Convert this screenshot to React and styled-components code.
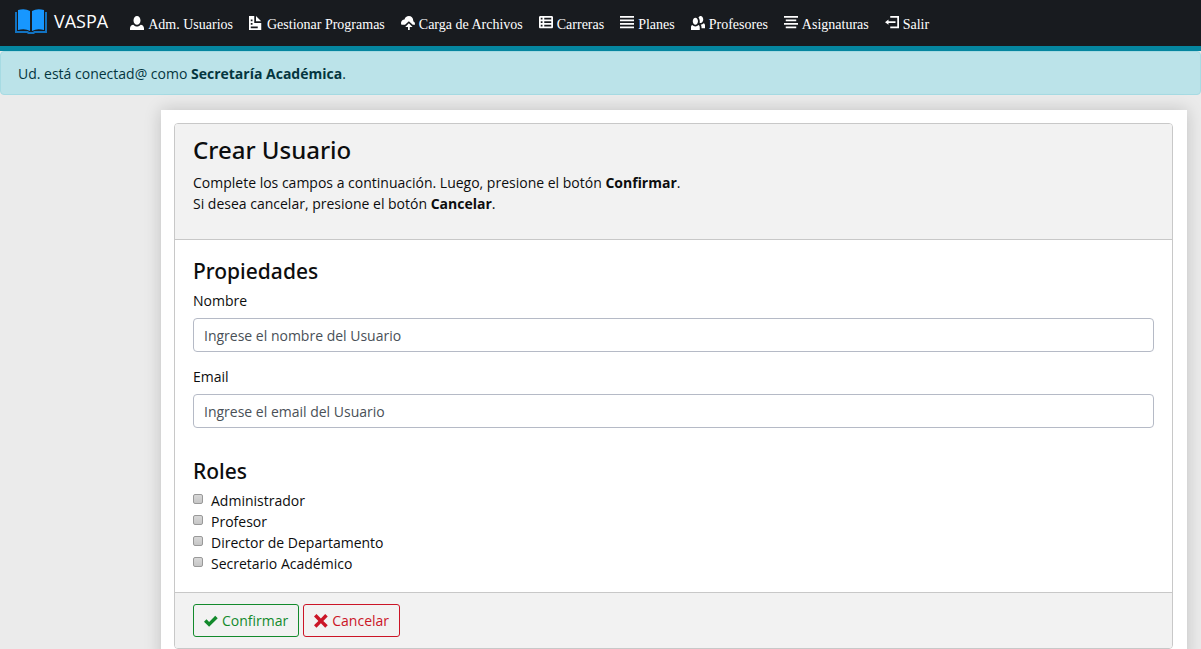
import React from "react";
import styled, { createGlobalStyle } from "styled-components";

const GlobalStyle = createGlobalStyle`
  *, *::before, *::after { box-sizing: border-box; }
  body {
    margin: 0;
    background: #ebebeb;
    color: #0c0d0e;
    font: 14px/21px "Open Sans", "Noto Sans", sans-serif;
  }
`;

const Navbar = styled.nav`
  display: flex;
  align-items: center;
  height: 51px;
  padding: 0 15px 3px;
  background: #181b1f;
  border-bottom: 5px solid #05869f;
`;

const Brand = styled.a`
  display: flex;
  align-items: center;
  gap: 7px;
  margin-right: 14px;
  color: #fff;
  font-size: 18px;
  line-height: 27px;
  text-decoration: none;
`;

const NavList = styled.ul`
  display: flex;
  margin: 0;
  padding: 6px 0 0;
  list-style: none;
`;

const NavLink = styled.a`
  display: block;
  padding: 0 8px;
  color: #fff;
  font-family: "Liberation Serif", serif;
  white-space: nowrap;
  text-decoration: none;
`;

const Glyph = styled.svg`
  width: 14px;
  height: 14px;
  margin-right: 4px;
  vertical-align: -1px;
  fill: currentColor;
`;

const Alert = styled.div`
  padding: 11px 17px 10px;
  border: 1px solid #a6dbe3;
  border-radius: 4px;
  background: #bbe3e9;
  color: #04363f;
`;

const Page = styled.main`
  margin: 15px 14px 0 161px;
  padding: 13px 14px 13px 13px;
  background: #fff;
  box-shadow: 0 0 16px rgba(0, 0, 0, 0.18);
`;

const Card = styled.form`
  border: 1px solid #c8c8c8;
  border-radius: 4px;
  overflow: hidden;
`;

const CardHeader = styled.header`
  padding: 10px 18px 25px;
  background: #f2f2f2;
  border-bottom: 1px solid #c8c8c8;
`;

const CardBody = styled.div`
  padding: 18px;
`;

const CardFooter = styled.footer`
  display: flex;
  gap: 4px;
  padding: 11px 18px;
  background: #f2f2f2;
  border-top: 1px solid #c8c8c8;
`;

const Title = styled.h1`
  margin: 0 0 6px;
  font-family: "Noto Sans", sans-serif;
  font-size: 24px;
  line-height: 32px;
  font-weight: 500;
`;

const Subtitle = styled.h2`
  margin: 0 0 6px;
  font-family: "Noto Sans", sans-serif;
  font-size: 21px;
  line-height: 26px;
  font-weight: 500;
`;

const Text = styled.p`
  margin: 0;
`;

const Field = styled.div`
  margin-bottom: 14px;
`;

const Label = styled.label`
  display: block;
  margin-bottom: 7px;
`;

const Input = styled.input`
  display: block;
  width: 100%;
  height: 34px;
  padding: 6px 10px;
  border: 1px solid #b5bac6;
  border-radius: 4px;
  background: #fff;
  color: #495057;
  font: inherit;
  &::placeholder { color: #495057; opacity: 1; }
`;

const Roles = styled.section`
  padding-top: 16px;
`;

const Option = styled.label`
  display: flex;
  gap: 8px;
`;

const Checkbox = styled.input`
  appearance: none;
  width: 10px;
  height: 10px;
  margin: 4px 0 0;
  border: 1px solid #999;
  border-radius: 2px;
  background: linear-gradient(#d8d8d8, #c6c6c6);
  &:checked { background: #05869f; }
`;

const Button = styled.button`
  display: flex;
  align-items: center;
  height: 33px;
  padding: 0 10px;
  border: 1px solid currentColor;
  border-radius: 3px;
  background: transparent;
  color: ${(p) => p.$color};
  font: inherit;
`;

const paths = {
  person: "M4 0c-1.1 0-2 1.12-2 2.5s.9 2.5 2 2.5 2-1.12 2-2.5-.9-2.5-2-2.5zm-2.09 5c-1.06.05-1.91.92-1.91 2v1h8v-1c0-1.08-.84-1.95-1.91-2-.54.61-1.28 1-2.09 1-.81 0-1.55-.39-2.09-1z",
  document: "M0 0v8h7v-4h-4v-4h-3zm4 0v3h3l-3-3zm-3 2h1v1h-1v-1zm0 2h1v1h-1v-1zm0 2h4v1h-4v-1z",
  upload: "M4.5 0c-1.21 0-2.27.86-2.5 2-1.1 0-2 .9-2 2 0 .37.11.71.28 1h2.02l2.2-2 2.2 2h1.21c.06-.16.09-.32.09-.5 0-.65-.42-1.29-1-1.5v-.5c0-1.38-1.12-2.5-2.5-2.5zm0 4.2l-2.1 2.1h1.6v1.7h1v-1.7h1.6l-2.1-2.1z",
  sheet: "M.75 0c-.4 0-.75.35-.75.75v5.5c0 .4.35.75.75.75h6.5c.4 0 .75-.35.75-.75v-5.5c0-.4-.35-.75-.75-.75h-6.5zm.25 1h1v1h-1v-1zm2 0h4v1h-4v-1zm-2 2h1v1h-1v-1zm2 0h4v1h-4v-1zm-2 2h1v1h-1v-1zm2 0h4v1h-4v-1z",
  justify: "M0 0v1h8v-1h-8zm0 2v1h8v-1h-8zm0 2v1h8v-1h-8zm0 2v1h8v-1h-8z",
  people: "M5.5 0c-.51 0-.95.35-1.22.88.45.54.72 1.28.72 2.13 0 .29-.03.55-.09.81.19.11.38.19.59.19.83 0 1.5-.9 1.5-2s-.67-2-1.5-2zm-3 1c-.83 0-1.5.9-1.5 2s.67 2 1.5 2 1.5-.9 1.5-2-.67-2-1.5-2zm4.75 3.16c-.43.51-1.02.82-1.69.84.27.38.44.84.44 1.34v.66h2v-1.66c0-.52-.31-.97-.75-1.19zm-6.5 1c-.44.22-.75.67-.75 1.19v1.66h5v-1.66c0-.52-.31-.97-.75-1.19-.45.53-1.06.84-1.75.84s-1.3-.32-1.75-.84z",
  center: "M0 0v1h8v-1h-8zm1 2v1h6v-1h-6zm-1 2v1h8v-1h-8zm1 2v1h6v-1h-6z",
  logout: "M3 0v1h4v5h-4v1h5v-7h-5zm-1 2l-2 1.5 2 1.5v-1h4v-1h-4v-1z",
  check: "M6.41 1l-.69.72-2.78 2.78-.81-.78-.72-.72-1.41 1.41.72.72 1.5 1.5.69.72.72-.72 3.5-3.5.72-.72-1.44-1.41z",
  cross: "M1.41 0l-1.41 1.41.72.72 1.78 1.81-1.78 1.78-.72.69 1.41 1.44.72-.72 1.81-1.81 1.78 1.81.69.72 1.44-1.44-.72-.69-1.81-1.78 1.81-1.81.72-.72-1.44-1.41-.69.72-1.78 1.78-1.81-1.78-.72-.72z",
};

const Icon = ({ name }) => (
  <Glyph viewBox="0 0 8 8" aria-hidden="true"><path d={paths[name]} /></Glyph>
);

const BookLogo = () => (
  <svg width="32" height="26" viewBox="0 0 32 26" aria-hidden="true">
    <path d="M0 3h2v19h11l1 1h4l1-1h11V3h2v21H20l-1 1h-6l-1-1H0z" fill="#1272c0" />
    <path d="M3 1Q10-1 15 2v20Q10 19 3 21zM29 1Q22-1 17 2v20q5-3 12-1z" fill="#1797ff" />
  </svg>
);

const links = [
  ["person", "Adm. Usuarios"],
  ["document", "Gestionar Programas"],
  ["upload", "Carga de Archivos"],
  ["sheet", "Carreras"],
  ["justify", "Planes"],
  ["people", "Profesores"],
  ["center", "Asignaturas"],
  ["logout", "Salir"],
];

const roles = ["Administrador", "Profesor", "Director de Departamento", "Secretario Académico"];

export default function App() {
  return (
    <>
      <GlobalStyle />
      <Navbar>
        <Brand href="#"><BookLogo />VASPA</Brand>
        <NavList>
          {links.map(([icon, text]) => (
            <li key={text}><NavLink href="#"><Icon name={icon} />{text}</NavLink></li>
          ))}
        </NavList>
      </Navbar>
      <Alert role="status">Ud. está conectad@ como <strong>Secretaría Académica</strong>.</Alert>
      <Page>
        <Card onSubmit={(e) => e.preventDefault()}>
          <CardHeader>
            <Title>Crear Usuario</Title>
            <Text>
              Complete los campos a continuación. Luego, presione el botón <strong>Confirmar</strong>.<br />
              Si desea cancelar, presione el botón <strong>Cancelar</strong>.
            </Text>
          </CardHeader>
          <CardBody>
            <Subtitle>Propiedades</Subtitle>
            <Field>
              <Label htmlFor="nombre">Nombre</Label>
              <Input id="nombre" type="text" placeholder="Ingrese el nombre del Usuario" />
            </Field>
            <Field>
              <Label htmlFor="email">Email</Label>
              <Input id="email" type="email" placeholder="Ingrese el email del Usuario" />
            </Field>
            <Roles>
              <Subtitle>Roles</Subtitle>
              {roles.map((role) => (
                <Option key={role}><Checkbox type="checkbox" />{role}</Option>
              ))}
            </Roles>
          </CardBody>
          <CardFooter>
            <Button type="submit" $color="#138a2c"><Icon name="check" />Confirmar</Button>
            <Button type="button" $color="#cb1527"><Icon name="cross" />Cancelar</Button>
          </CardFooter>
        </Card>
      </Page>
    </>
  );
}
